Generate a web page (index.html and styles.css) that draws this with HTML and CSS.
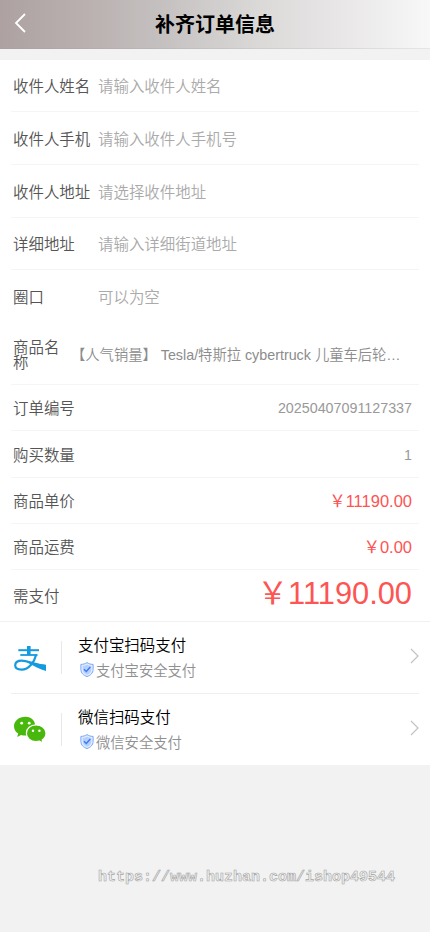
FILE: index.html
```html
<!DOCTYPE html>
<html lang="zh-CN">
<head>
<meta charset="utf-8">
<meta name="viewport" content="width=device-width, initial-scale=1">
<title>补齐订单信息</title>
<link rel="stylesheet" href="styles.css">
</head>
<body>
<svg class="defs" width="0" height="0">
  <symbol id="shield" viewBox="0 0 14 15">
    <path d="M7 .6 C5.4 1.8 3.2 2.4 .9 2.4 V7.4 C.9 11 3.5 13.4 7 14.5 C10.5 13.4 13.1 11 13.1 7.4 V2.4 C10.8 2.4 8.6 1.8 7 .6Z" fill="#e6efff" stroke="#76a3f6" stroke-width="1"/>
    <path d="M7 2.4 C5.7 3.3 4.2 3.7 2.7 3.8 V7.4 C2.7 9.9 4.4 11.7 7 12.8 C9.6 11.7 11.3 9.9 11.3 7.4 V3.8 C9.8 3.7 8.3 3.3 7 2.4Z" fill="#b5d0ff"/>
    <path d="M4 7.2 L6.3 9.4 L10.3 5" fill="none" stroke="#3b7bec" stroke-width="1.4"/>
  </symbol>
</svg>
<header class="header">
  <svg class="back" width="12" height="20" viewBox="0 0 12 20"><path d="M11 1 L2 10 L11 19" fill="none" stroke="#fff" stroke-width="1.8"/></svg>
  <h1 class="title">补齐订单信息</h1>
</header>
<main class="card">
  <div class="row field short"><span class="label">收件人姓名</span><span class="hint">请输入收件人姓名</span></div>
  <div class="row field"><span class="label">收件人手机</span><span class="hint">请输入收件人手机号</span></div>
  <div class="row field"><span class="label">收件人地址</span><span class="hint">请选择收件地址</span></div>
  <div class="row field short"><span class="label">详细地址</span><span class="hint">请输入详细街道地址</span></div>
  <div class="row field last"><span class="label">圈口</span><span class="hint">可以为空</span></div>
  <div class="row product"><span class="label">商品名称</span><span class="name">【人气销量】 Tesla/特斯拉 cybertruck 儿童车后轮…</span></div>
  <div class="row info"><span class="label">订单编号</span><span class="value">20250407091127337</span></div>
  <div class="row info tall"><span class="label">购买数量</span><span class="value">1</span></div>
  <div class="row info"><span class="label">商品单价</span><span class="price"><span class="yen">￥</span>11190.00</span></div>
  <div class="row info"><span class="label">商品运费</span><span class="price"><span class="yen">￥</span>0.00</span></div>
  <div class="row total"><span class="label">需支付</span><span class="price big"><span class="yen">￥</span>11190.00</span></div>
  <div class="pay">
    <svg class="logo" width="34" height="30" viewBox="0 0 34 30">
      <g fill="none" stroke="#149ade">
        <path d="M5.3 7.2 H26" stroke-width="2"/>
        <path d="M15.8 3 V12" stroke-width="3.6"/>
        <path d="M7.3 12 H24.5" stroke-width="1.8"/>
        <path d="M23.2 11.4 C21.5 18.5 16 26.6 8.6 26.6 C4.4 26.6 2.2 25 2.2 22.3 C2.2 19.3 4.8 17.6 8.8 17.6 C14.5 17.6 21 21.6 32.5 23" stroke-width="2.2"/>
      </g>
      <path d="M14 17.8 C20 20.4 26 21.4 33 21.8 V27.9 C27 26.4 21 23.2 14 19.6Z" fill="#149ade"/>
    </svg>
    <div class="pay-text">
      <div class="pay-title">支付宝扫码支付</div>
      <div class="pay-sub"><svg class="shield" width="14" height="15"><use href="#shield"/></svg>支付宝安全支付</div>
    </div>
    <svg class="arrow" width="9" height="16" viewBox="0 0 9 16"><path d="M1 1 L8 8 L1 15" fill="none" stroke="#c4c4c4" stroke-width="1.3"/></svg>
  </div>
  <div class="pay wechat">
    <svg class="logo" width="34" height="30" viewBox="0 0 34 30">
      <path d="M12.4 1.7 C6 1.7 1 5.9 1 11.2 C1 14.2 2.6 16.8 5.2 18.6 L4.2 22 L8 19.9 C10.3 20.6 12 20.7 14 20.4 L22 12 C23 6.5 18.6 1.7 12.4 1.7Z" fill="#48b80c"/>
      <path d="M23 9.9 C17.5 9.9 13.4 13.5 13.4 18.2 C13.4 23 17.5 26.7 23 26.7 C24.3 26.7 25.4 26.5 26.5 26.2 L30 28 L29.2 25 C31.6 23.3 33 20.9 33 18.2 C33 13.5 28.5 9.9 23 9.9Z" fill="#48b80c" stroke="#fff" stroke-width="1.2"/>
      <g fill="#fff"><circle cx="8.7" cy="8.2" r="1.4"/><circle cx="16.2" cy="8.2" r="1.4"/><circle cx="20" cy="15.8" r="1.2"/><circle cx="26.4" cy="15.8" r="1.2"/></g>
    </svg>
    <div class="pay-text">
      <div class="pay-title">微信扫码支付</div>
      <div class="pay-sub"><svg class="shield" width="14" height="15"><use href="#shield"/></svg>微信安全支付</div>
    </div>
    <svg class="arrow" width="9" height="16" viewBox="0 0 9 16"><path d="M1 1 L8 8 L1 15" fill="none" stroke="#c4c4c4" stroke-width="1.3"/></svg>
  </div>
</main>
<footer class="mark">https://www.huzhan.com/ishop49544</footer>
</body>
</html>
```
FILE: styles.css
```css
* { box-sizing: border-box; }
body {
  margin: 0;
  min-height: 932px;
  background: #f2f2f2;
  font-family: "Liberation Sans", "Noto Sans CJK SC", sans-serif;
  font-size: 15.45px;
  font-weight: 350;
  color: #555;
}
.defs { display: block; }
.header {
  display: flex;
  align-items: center;
  height: 49px;
  padding: 0 14px;
  border-bottom: 1px solid rgba(150, 150, 150, .18);
  background: linear-gradient(90deg, #ada2a1 0%, #b9b0af 20%, #c7c3c3 40%, #dbdad8 61%, #e9e7e8 80%, #f8f8f8 100%);
}
.back { margin-top: -3px; }
.title {
  flex: 1;
  margin: 0 12px 0 0;
  text-align: center;
  font-family: KaiTi, "Noto Sans CJK SC", serif;
  font-size: 20px;
  font-weight: 700;
  line-height: 48px;
  color: #000;
}
.card { margin-top: 11px; background: #fff; }
.row {
  display: flex;
  align-items: center;
  height: 53px;
  margin: 0 11px;
  padding: 2px 7px 0 2px;
  border-bottom: 1px solid #f5f5f5;
  line-height: 22px;
}
.short { height: 52px; }
.last { border: 0; }
.field { padding-top: 3px; }
.field .label { width: 85px; flex: none; white-space: nowrap; }
.hint { color: #aaa; }
.product { height: 62px; }
.product .label { width: 48px; flex: none; line-height: 15px; }
.name {
  margin-left: 10px;
  white-space: nowrap;
  font-size: 14.3px;
  color: #8c8c8c;
}
.info { height: 46px; justify-content: space-between; }
.tall { height: 47px; padding-top: 3px; }
.value { font-size: 14.3px; color: #999; margin-top: -1px; }
.price { font-size: 16.5px; color: #fd5454; font-weight: 400; margin-top: -2px; }
.total { height: 52px; margin: 0; padding: 2px 18px 0 13px; border-color: #f0f0f0; justify-content: space-between; }
.big { font-size: 30.8px; line-height: 40px; margin-top: -6px; }
.pay {
  display: flex;
  align-items: center;
  height: 72px;
  margin: 0 11px;
  border-bottom: 1px solid #efefef;
}
.wechat { height: 71px; border: 0; }
.logo { margin-left: 2px; flex: none; }
.pay-text {
  position: relative;
  flex: 1;
  padding: 2px 0 0 31px;
}
.pay-text::before {
  content: "";
  position: absolute;
  left: 14px;
  top: 9px;
  width: 1px;
  height: 33px;
  background: #e8e8e8;
}
.pay-title { color: #000; line-height: 24px; }
.pay-sub { display: flex; align-items: center; font-size: 14.3px; line-height: 26px; color: #909090; }
.shield { margin: -2px 2px 0 2px; }
.arrow { flex: none; margin-top: -3px; }
.mark {
  margin: 102px 0 0 98px;
  font-family: "Liberation Mono", monospace;
  font-size: 15px;
  line-height: 22px;
  font-weight: 700;
  color: #f2f2f2;
  -webkit-text-stroke: .6px #a4a4a4;
}
```
